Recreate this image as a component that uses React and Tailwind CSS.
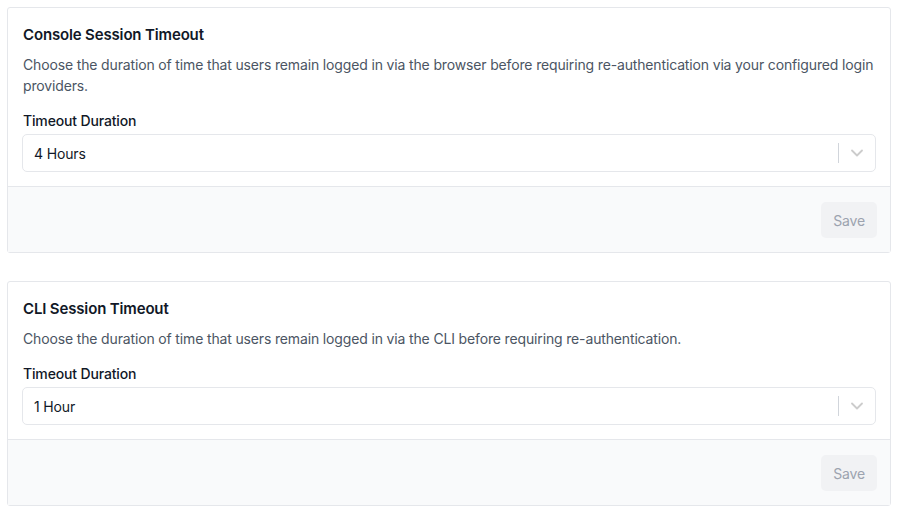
import { ChevronDown } from "lucide-react";

const SessionCard = ({ title, description, value }) => {
  return (
    <div className="rounded-[3px] border border-[#e5e7eb] bg-white">
      <div className="px-[14px] pt-[16px] pb-[14px]">
        <h2 className="pl-px text-[15px] font-semibold leading-[22px] text-[#111827]">{title}</h2>
        <p className="mt-[8px] pl-px text-[14px] leading-[21px] text-[#4b5563]">{description}</p>
        <label className="mt-[15px] block pl-px text-[14px] font-medium leading-[20px] text-[#111827]">
          Timeout Duration
        </label>
        <div className="mt-[3px] flex h-[38px] items-center rounded-[5px] border border-[#e5e7eb] bg-white">
          <span className="flex-1 pl-[11px] text-[14px] text-[#111827]">{value}</span>
          <span className="h-[20px] w-px bg-[#d1d5db]"></span>
          <span className="flex w-[36px] items-center justify-center">
            <ChevronDown size={20} strokeWidth={2.2} className="text-[#cccccc]" />
          </span>
        </div>
      </div>
      <div className="flex justify-end border-t border-[#e5e7eb] bg-[#f9fafb] px-[13px] pt-[15px] pb-[14px]">
        <button className="h-[36px] rounded-[5px] bg-[#f1f2f4] px-[12px] text-[14px] text-[#9ca3af]">
          Save
        </button>
      </div>
    </div>
  );
};

export default function App() {
  return (
    <div
      className="flex min-h-[512px] w-[898px] flex-col gap-[28px] bg-white px-[7px] pt-[7px] tracking-[-0.15px]"
      style={{ fontFamily: "Inter, 'Liberation Sans', sans-serif" }}
    >
      <SessionCard
        title="Console Session Timeout"
        description="Choose the duration of time that users remain logged in via the browser before requiring re-authentication via your configured login providers."
        value="4 Hours"
      />
      <SessionCard
        title="CLI Session Timeout"
        description="Choose the duration of time that users remain logged in via the CLI before requiring re-authentication."
        value="1 Hour"
      />
    </div>
  );
}
